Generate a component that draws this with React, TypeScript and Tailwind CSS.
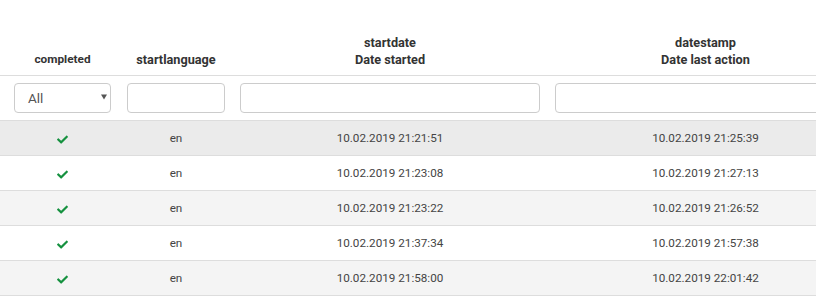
import React from "react";

const rows = [
  ["10.02.2019 21:21:51", "10.02.2019 21:25:39"],
  ["10.02.2019 21:23:08", "10.02.2019 21:27:13"],
  ["10.02.2019 21:23:22", "10.02.2019 21:26:52"],
  ["10.02.2019 21:37:34", "10.02.2019 21:57:38"],
  ["10.02.2019 21:58:00", "10.02.2019 22:01:42"],
];

const grid = "grid grid-cols-[119px_114px_315px_316px] w-[864px]";

function Check() {
  return (
    <svg width="11" height="9" viewBox="0 0 512 400" className="inline-block">
      <path
        fill="#15913f"
        d="M173.9 390.3L7.5 223.9c-10-10-10-26.2 0-36.2l36.2-36.2c10-10 26.2-10 36.2 0L192 263.6 432.1 23.5c10-10 26.2-10 36.2 0l36.2 36.2c10 10 10 26.2 0 36.2L210.1 390.3c-10 10-26.2 10-36.2 0z"
      />
    </svg>
  );
}

export default function App() {
  return (
    <div
      className="w-[816px] h-[304px] overflow-hidden bg-white text-[#333]"
      style={{ fontFamily: "Roboto, 'Liberation Sans', sans-serif" }}
    >
      <div className={`${grid} h-[76px] border-b border-[#dddddd] items-end font-bold leading-[17px]`}>
        <div className="pl-[14px] pr-[8px] pb-[7px] text-center text-[11.8px]">completed</div>
        <div className="pl-[8px] pr-[8px] pb-[7px] text-center text-[12.7px]">startlanguage</div>
        <div className="pl-[7px] pr-[8px] pb-[7px] text-center text-[12.7px]">
          <div>startdate</div>
          <div>Date started</div>
        </div>
        <div className="pl-[7px] pr-[8px] pb-[7px] text-center text-[12.7px]">
          <div>datestamp</div>
          <div>Date last action</div>
        </div>
      </div>
      <div className={`${grid} h-[45px] border-b border-[#dddddd] items-center`}>
        <div className="pl-[14px] pr-[8px]">
          <div className="relative h-[30px] rounded-[4px] border border-[#cccccc] bg-white flex items-center pl-[13px] text-[13.5px] text-[#555]">
            All
            <svg width="6" height="6" viewBox="0 0 6 6" className="absolute right-[3px] top-[10px]">
              <path d="M0 0.5H6L3 5.5Z" fill="#555" />
            </svg>
          </div>
        </div>
        <div className="pl-[8px] pr-[8px]">
          <div className="h-[30px] rounded-[4px] border border-[#cccccc] bg-white" />
        </div>
        <div className="pl-[7px] pr-[8px]">
          <div className="h-[30px] rounded-[4px] border border-[#cccccc] bg-white" />
        </div>
        <div className="pl-[7px] pr-[8px]">
          <div className="h-[30px] rounded-[4px] border border-[#cccccc] bg-white" />
        </div>
      </div>
      {rows.map((r, i) => (
        <div
          key={i}
          className={`${grid} h-[35px] border-b border-[#dddddd] items-center text-[11.7px] text-[#444] pt-[2px] ${
            i === 0 ? "bg-[#ebebeb]" : i % 2 === 0 ? "bg-[#f4f4f4]" : "bg-white"
          }`}
        >
          <div className="pl-[14px] pr-[8px] text-center flex justify-center">
            <Check />
          </div>
          <div className="pl-[8px] pr-[8px] text-center">en</div>
          <div className="pl-[7px] pr-[8px] text-center">{r[0]}</div>
          <div className="pl-[7px] pr-[8px] text-center">{r[1]}</div>
        </div>
      ))}
    </div>
  );
}
